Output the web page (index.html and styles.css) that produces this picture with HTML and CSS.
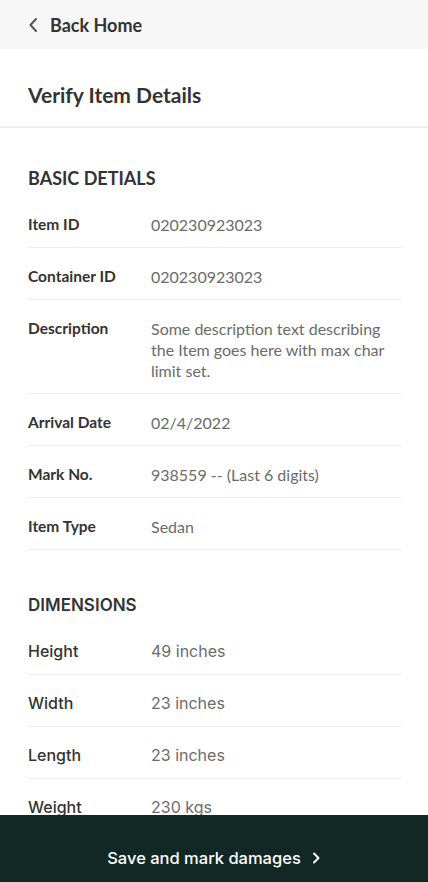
FILE: index.html
```html
<!DOCTYPE html>
<html lang="en">
<head>
  <meta charset="UTF-8">
  <meta name="viewport" content="width=device-width, initial-scale=1.0">
  <title>Verify Item Details</title>
  <link rel="stylesheet" href="styles.css">
</head>
<body>
  <header class="topbar">
    <a class="back-link" href="#">
      <svg class="back-icon" width="10" height="16" viewBox="0 0 10 16" aria-hidden="true">
        <path d="M8 2 L2.5 8 L8 14" fill="none" stroke="#555" stroke-width="2" stroke-linecap="round" stroke-linejoin="round"/>
      </svg>
      Back Home
    </a>
  </header>

  <div class="page-title">
    <h1>Verify Item Details</h1>
  </div>

  <main class="content">
    <section class="details">
      <h2>BASIC DETIALS</h2>
      <div class="row">
        <span class="label">Item ID</span>
        <span class="value">020230923023</span>
      </div>
      <div class="row">
        <span class="label">Container ID</span>
        <span class="value">020230923023</span>
      </div>
      <div class="row">
        <span class="label">Description</span>
        <span class="value">Some description text describing the Item goes here with max char limit set.</span>
      </div>
      <div class="row">
        <span class="label">Arrival Date</span>
        <span class="value">02/4/2022</span>
      </div>
      <div class="row">
        <span class="label">Mark No.</span>
        <span class="value">938559 -- (Last 6 digits)</span>
      </div>
      <div class="row">
        <span class="label">Item Type</span>
        <span class="value">Sedan</span>
      </div>
    </section>

    <section class="details dims">
      <h2>DIMENSIONS</h2>
      <div class="row">
        <span class="label">Height</span>
        <span class="value">49 inches</span>
      </div>
      <div class="row">
        <span class="label">Width</span>
        <span class="value">23 inches</span>
      </div>
      <div class="row">
        <span class="label">Length</span>
        <span class="value">23 inches</span>
      </div>
      <div class="row">
        <span class="label">Weight</span>
        <span class="value">230 kgs</span>
      </div>
    </section>
  </main>

  <footer class="action-bar">
    <button type="button" class="save-btn">
      Save and mark damages
      <svg width="10" height="14" viewBox="0 0 10 14" aria-hidden="true">
        <path d="M3 2.5 L7.5 7 L3 11.5" fill="none" stroke="#fff" stroke-width="2" stroke-linecap="round" stroke-linejoin="round"/>
      </svg>
    </button>
  </footer>
</body>
</html>
```

FILE: styles.css
```css
body {
  margin: 0;
  font-family: Lato, "Open Sans", sans-serif;
  color: #333;
  background: #fff;
}
.topbar {
  background-color: #f7f7f7;
  height: 49px;
  display: flex;
  align-items: center;
  padding: 0 28px;
}
.back-link {
  display: flex;
  align-items: center;
  gap: 12px;
  color: #333;
  text-decoration: none;
  font-size: 18px;
  font-weight: 700;
}
.page-title {
  border-bottom: 2px solid #f0f0f0;
  padding: 34px 28px 0;
  height: 79px;
  box-sizing: border-box;
}
h1 {
  margin: 0;
  font-size: 21px;
  line-height: 24px;
  font-weight: 700;
  color: #333;
}
.content {
  padding: 39px 26px 120px 28px;
}
.details h2 {
  margin: 0 0 7px;
  font-size: 18px;
  line-height: 22px;
  font-weight: 700;
  color: #333;
}
.dims {
  margin-top: 44px;
  font-family: Inter, sans-serif;
}
.dims h2 {
  font-size: 17px;
  font-weight: 600;
}
.row {
  display: flex;
  padding: 18px 0 12px;
  line-height: 21px;
  border-bottom: 1px solid #eeeeee;
}
.label {
  width: 123px;
  flex-shrink: 0;
  font-size: 15.5px;
  font-weight: 700;
  color: #333;
}
.value {
  max-width: 236px;
  font-size: 16px;
  color: #6b6b6b;
}
.dims .label {
  font-weight: 500;
  font-size: 16px;
}
.dims .value {
  font-size: 16px;
}
.action-bar {
  position: fixed;
  left: 0;
  right: 0;
  bottom: 0;
  height: 67px;
  background-color: #112825;
  display: flex;
  justify-content: center;
  align-items: flex-start;
  padding-top: 32px;
  box-sizing: border-box;
}
.save-btn {
  background: none;
  border: none;
  color: #fff;
  font-family: Inter, sans-serif;
  font-size: 16.5px;
  font-weight: 500;
  line-height: 22px;
  display: flex;
  align-items: center;
  gap: 10px;
  padding: 0;
  cursor: pointer;
}
```
